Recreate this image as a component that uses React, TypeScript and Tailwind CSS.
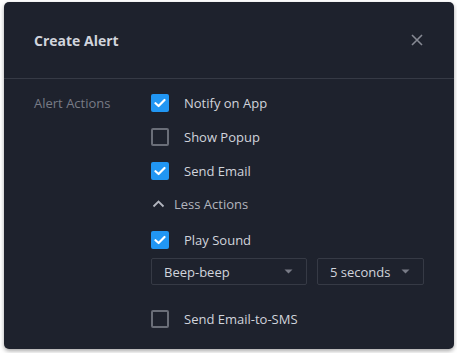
import React from "react";

type CheckRowProps = { label: string; checked?: boolean; className?: string };

function Check({ checked }: { checked?: boolean }) {
  if (checked) {
    return (
      <span className="flex h-[18px] w-[18px] items-center justify-center rounded-[2px] bg-[#2196f3]">
        <svg width="12" height="10" viewBox="0 0 12 10" fill="none">
          <path d="M1.5 5.2 4.6 8 10.5 2" stroke="#fff" strokeWidth="2.2" strokeLinecap="round" strokeLinejoin="round" />
        </svg>
      </span>
    );
  }
  return <span className="h-[18px] w-[18px] rounded-[2px] border-2 border-[#6a6e78]" />;
}

function CheckRow({ label, checked, className }: CheckRowProps) {
  return (
    <div className={"flex h-[18px] items-center gap-[15px] " + (className ?? "")}>
      <Check checked={checked} />
      <span className="text-[13px] leading-[18px] text-[#d1d4dc]">{label}</span>
    </div>
  );
}

function Select({ value, className }: { value: string; className?: string }) {
  return (
    <div
      className={
        "flex h-[27px] items-center justify-between rounded-[2px] border border-[#363a45] pl-[12px] pr-[13px] text-[13px] leading-[18px] text-[#d1d4dc] " +
        (className ?? "")
      }
    >
      <span>{value}</span>
      <svg width="9" height="5" viewBox="0 0 9 5">
        <path d="M0.5 0.5h8L4.5 4.5z" fill="#787b86" />
      </svg>
    </div>
  );
}

export default function App() {
  return (
    <div
      className="h-[353px] w-[457px] bg-white pl-[4px] pt-[2px]"
      style={{ fontFamily: '"Open Sans", "Noto Sans", sans-serif' }}
    >
      <div className="h-[347px] w-[450px] overflow-hidden rounded-[5px] bg-[#1e222d] shadow-[0_2px_4px_rgba(0,0,0,0.35)]">
        <div className="flex h-[77px] items-center justify-between border-b border-[#363a45] pl-[30px] pr-[31px]">
          <span className="text-[14px] font-bold text-[#d1d4dc]">Create Alert</span>
          <svg width="12" height="12" viewBox="0 0 12 12">
            <path d="M1 1 11 11M11 1 1 11" stroke="#868993" strokeWidth="1.6" />
          </svg>
        </div>
        <div className="flex pl-[30px] pt-[15px]">
          <div className="w-[117px] text-[13px] leading-[18px] text-[#787b86]">Alert Actions</div>
          <div className="flex flex-col">
            <CheckRow label="Notify on App" checked />
            <CheckRow label="Show Popup" className="mt-[16px]" />
            <CheckRow label="Send Email" checked className="mt-[16px]" />
            <div className="mt-[15px] flex h-[18px] items-center gap-[9px] text-[13px] leading-[18px] text-[#b2b5be]">
              <svg width="13" height="8" viewBox="0 0 13 8" className="ml-[1px]">
                <path d="M1.5 6.5 6.5 1.5 11.5 6.5" stroke="#b2b5be" strokeWidth="1.8" fill="none" />
              </svg>
              <span>Less Actions</span>
            </div>
            <CheckRow label="Play Sound" checked className="mt-[18px]" />
            <div className="mt-[9px] flex gap-[10px]">
              <Select value="Beep-beep" className="w-[156px]" />
              <Select value="5 seconds" className="w-[107px]" />
            </div>
            <CheckRow label="Send Email-to-SMS" className="mt-[25px]" />
          </div>
        </div>
      </div>
    </div>
  );
}
